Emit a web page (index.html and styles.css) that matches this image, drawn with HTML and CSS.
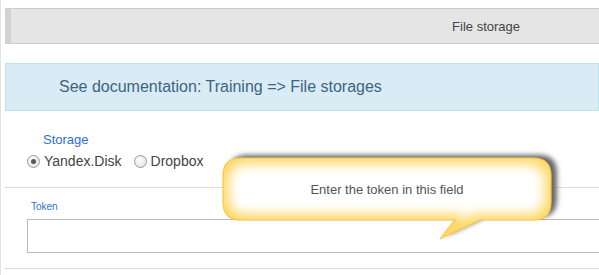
FILE: index.html
```html
<!DOCTYPE html>
<html lang="en">
  <head>
    <meta charset="UTF-8" />
    <meta name="viewport" content="width=device-width, initial-scale=1.0" />
    <title>File storage</title>
    <link rel="stylesheet" href="styles.css">
  </head>
  <body>
    <div class="page">
      <div class="titlebar">File storage</div>

      <div class="info">See documentation: Training =&gt; File storages</div>

      <div class="field">
        <div class="field-label">Storage</div>
        <div class="radios">
          <label class="radio"><span class="dot checked"></span>Yandex.Disk</label>
          <label class="radio"><span class="dot"></span>Dropbox</label>
        </div>
      </div>

      <div class="divider"></div>

      <div class="field token">
        <div class="small-label">Token</div>
        <input type="text" class="token-input" />
      </div>

      <div class="divider bottom"></div>

      <div class="callout">
        <svg width="350" height="95" viewBox="0 0 350 95">
          <defs>
            <filter id="shade" x="-10%" y="-20%" width="120%" height="140%">
              <feGaussianBlur stdDeviation="2.5" />
            </filter>
            <filter id="glow" x="-10%" y="-20%" width="120%" height="140%">
              <feMorphology operator="erode" radius="6" />
              <feGaussianBlur stdDeviation="6" />
            </filter>
            <clipPath id="bubble-clip">
              <path d="M26 8 H318 Q336 8 336 26 V52 Q336 70 318 70 H265 L225 89 L240 70 H26 Q8 70 8 52 V26 Q8 8 26 8 Z" />
            </clipPath>
          </defs>
          <path d="M26 8 H318 Q336 8 336 26 V52 Q336 70 318 70 H265 L225 89 L240 70 H26 Q8 70 8 52 V26 Q8 8 26 8 Z"
                transform="translate(6,-3)" fill="#666" filter="url(#shade)" />
          <path d="M26 8 H318 Q336 8 336 26 V52 Q336 70 318 70 H265 L225 89 L240 70 H26 Q8 70 8 52 V26 Q8 8 26 8 Z"
                fill="#fdd866" />
          <g clip-path="url(#bubble-clip)">
            <path d="M26 8 H318 Q336 8 336 26 V52 Q336 70 318 70 H265 L225 89 L240 70 H26 Q8 70 8 52 V26 Q8 8 26 8 Z"
                  fill="#ffffff" filter="url(#glow)" />
          </g>
          <path d="M26 8 H318 Q336 8 336 26 V52 Q336 70 318 70 H265 L225 89 L240 70 H26 Q8 70 8 52 V26 Q8 8 26 8 Z"
                fill="none" stroke="#f7c948" stroke-width="1.2" />
        </svg>
        <div class="callout-text">Enter the token in this field</div>
      </div>
    </div>
  </body>
</html>
```

FILE: styles.css
```css
body {
  margin: 0;
  font-family: "Liberation Sans", Arial, sans-serif;
  background: #fff;
  overflow: hidden;
}

.page {
  position: relative;
  min-height: 275px;
  border-left: 1px solid #e3e3e3;
  padding-left: 4px;
  padding-top: 8px;
  box-sizing: border-box;
}

.titlebar {
  height: 34px;
  border-top: 1px solid #cccccc;
  border-bottom: 1px solid #cccccc;
  border-left: 6px solid #d2d2d2;
  background-color: #e5e5e5;
  display: flex;
  align-items: center;
  justify-content: flex-end;
  padding-right: 79px;
  font-size: 13px;
  color: #444;
}

.info {
  margin-top: 19px;
  height: 46px;
  border: 1px solid #bde3ef;
  background-color: #d9ecf5;
  display: flex;
  align-items: center;
  padding-left: 53px;
  font-size: 16px;
  color: #3d6480;
}

.field {
  padding-left: 22px;
}

.field-label {
  margin-top: 21px;
  margin-left: 16px;
  font-size: 13px;
  line-height: 15px;
  color: #2f6fcf;
}

.radios {
  margin-top: 6px;
  display: flex;
  gap: 12px;
  font-size: 14px;
  line-height: 17px;
  color: #444;
}

.radio {
  display: flex;
  align-items: center;
  gap: 4px;
}

.dot {
  width: 11px;
  height: 11px;
  border: 1px solid #9a9a9a;
  border-radius: 50%;
  background: radial-gradient(circle at 40% 35%, #ffffff, #dcdcdc);
  display: flex;
  align-items: center;
  justify-content: center;
}

.dot.checked::after {
  content: "";
  width: 5px;
  height: 5px;
  border-radius: 50%;
  background-color: #555;
}

.divider {
  margin-top: 17px;
  height: 1px;
  background-color: #dddddd;
}

.token .small-label {
  margin-top: 13px;
  margin-left: 4px;
  font-size: 10px;
  line-height: 12px;
  color: #2f6fcf;
}

.token-input {
  display: block;
  margin-top: 6px;
  width: 100%;
  height: 34px;
  box-sizing: border-box;
  border: 1px solid #bbbbbb;
  border-right: none;
  padding: 4px 8px;
  font-size: 14px;
}

.divider.bottom {
  margin-top: 15px;
}

.callout {
  position: absolute;
  left: 214px;
  top: 150px;
  width: 350px;
  height: 95px;
}

.callout svg {
  display: block;
}

.callout-text {
  position: absolute;
  left: 8px;
  top: 8px;
  width: 328px;
  height: 62px;
  display: flex;
  align-items: center;
  justify-content: center;
  font-size: 13px;
  color: #555;
}
```
